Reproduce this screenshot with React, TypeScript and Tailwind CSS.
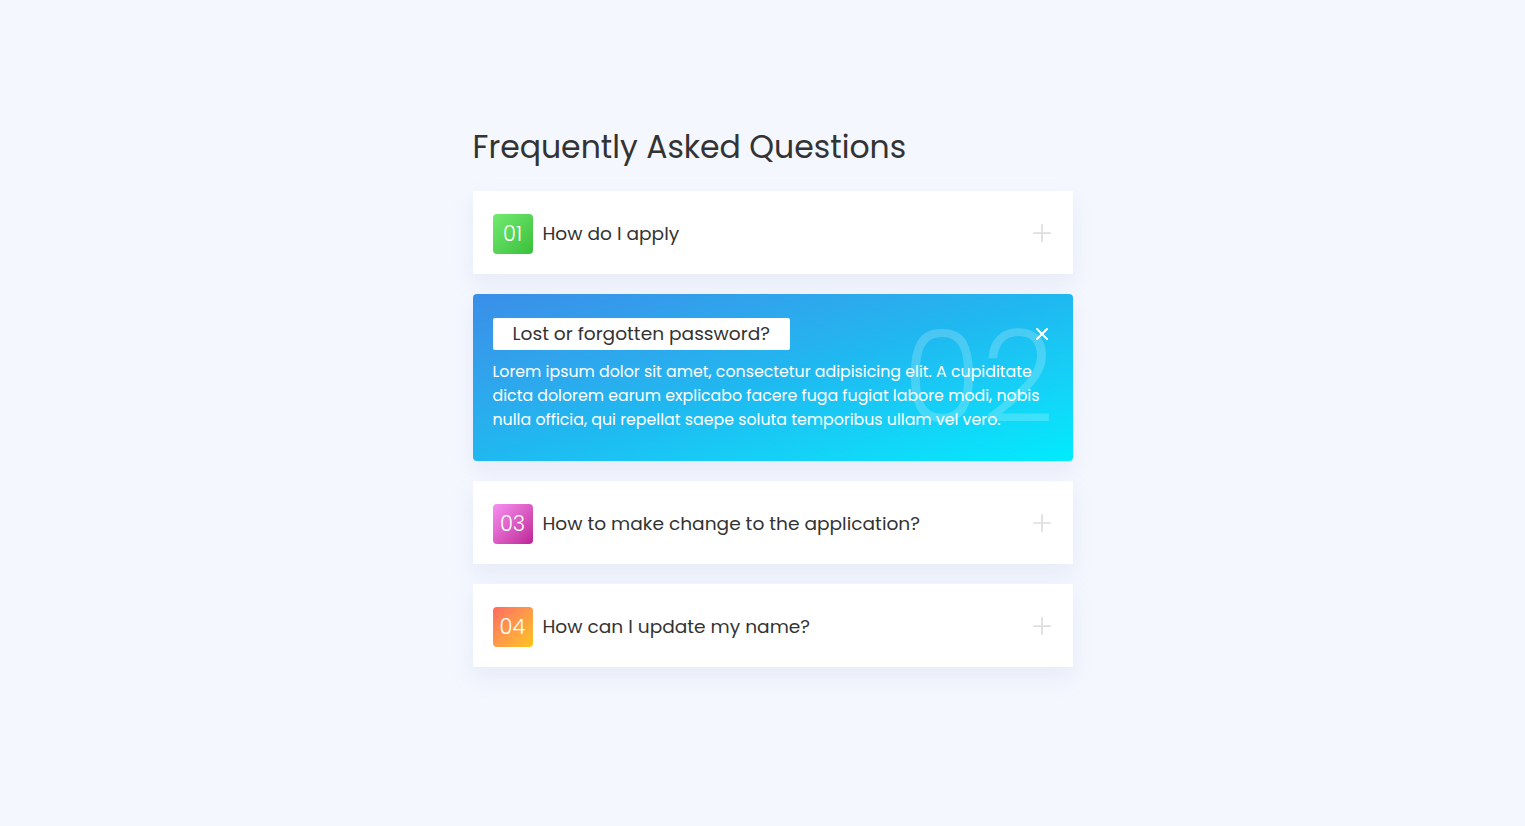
import { Plus, X } from "lucide-react";

interface IFaqItem {
  num: string;
  question: string;
  badge: string;
}

const faqs: IFaqItem[] = [
  {
    num: "01",
    question: "How do I apply",
    badge: "bg-gradient-to-br from-[#72ea70] to-[#38c03a]",
  },
  {
    num: "03",
    question: "How to make change to the application?",
    badge: "bg-gradient-to-br from-[#f890f2] to-[#bd1f98]",
  },
  {
    num: "04",
    question: "How can I update my name?",
    badge: "bg-gradient-to-br from-[#ff6a5e] to-[#ffc40a]",
  },
];

const ClosedItem = ({ item }: { item: IFaqItem }) => {
  return (
    <div className="flex h-[83px] items-center bg-white pr-[17px] pl-5 shadow-[0_10px_20px_rgba(170,185,220,0.18)]">
      <div
        className={`mt-[2px] flex h-10 w-10 items-center justify-center rounded-[4px] text-[21px] font-light text-white ${item.badge}`}
      >
        {item.num}
      </div>
      <p className="mt-[3px] ml-[10px] text-[18.6px] text-[#333]">
        {item.question}
      </p>
      <Plus className="ml-auto h-7 w-7 text-[#dedede]" strokeWidth={1.5} />
    </div>
  );
};

const OpenItem = () => {
  return (
    <div className="relative overflow-hidden rounded-[4px] bg-gradient-to-br from-[#3a8ee8] via-[#1fb8f0] to-[#00ebfd] px-5 pt-6 pb-[29px] shadow-[0_10px_20px_rgba(170,185,220,0.18)]">
      <span className="pointer-events-none absolute top-[14px] right-[18px] text-[128px] leading-[1.1] font-light text-white/20">
        02
      </span>
      <div className="relative flex items-start justify-between">
        <div className="flex h-8 items-center rounded-[2px] bg-white px-5 text-[18.6px] text-[#333]">
          Lost or forgotten password?
        </div>
        <X className="mt-[6px] mr-[1px] h-5 w-5 text-white" strokeWidth={2.5} />
      </div>
      <p className="relative mt-[10px] text-[15.8px] leading-6 text-white">
        Lorem ipsum dolor sit amet, consectetur adipisicing elit. A cupiditate
        dicta dolorem earum explicabo facere fuga fugiat labore modi, nobis
        nulla officia, qui repellat saepe soluta temporibus ullam vel vero.
      </p>
    </div>
  );
};

const App = () => {
  return (
    <div className="min-h-screen bg-[#f4f7fe] pl-5 font-['Poppins','Inter',sans-serif]">
      <div className="mx-auto w-[600px] pt-[124px]">
        <h1 className="text-[31.5px] leading-[46px] text-[#333]">
          Frequently Asked Questions
        </h1>
        <div className="mt-[21px] flex flex-col gap-5">
          <ClosedItem item={faqs[0]} />
          <OpenItem />
          <ClosedItem item={faqs[1]} />
          <ClosedItem item={faqs[2]} />
        </div>
      </div>
    </div>
  );
};

export default App;
